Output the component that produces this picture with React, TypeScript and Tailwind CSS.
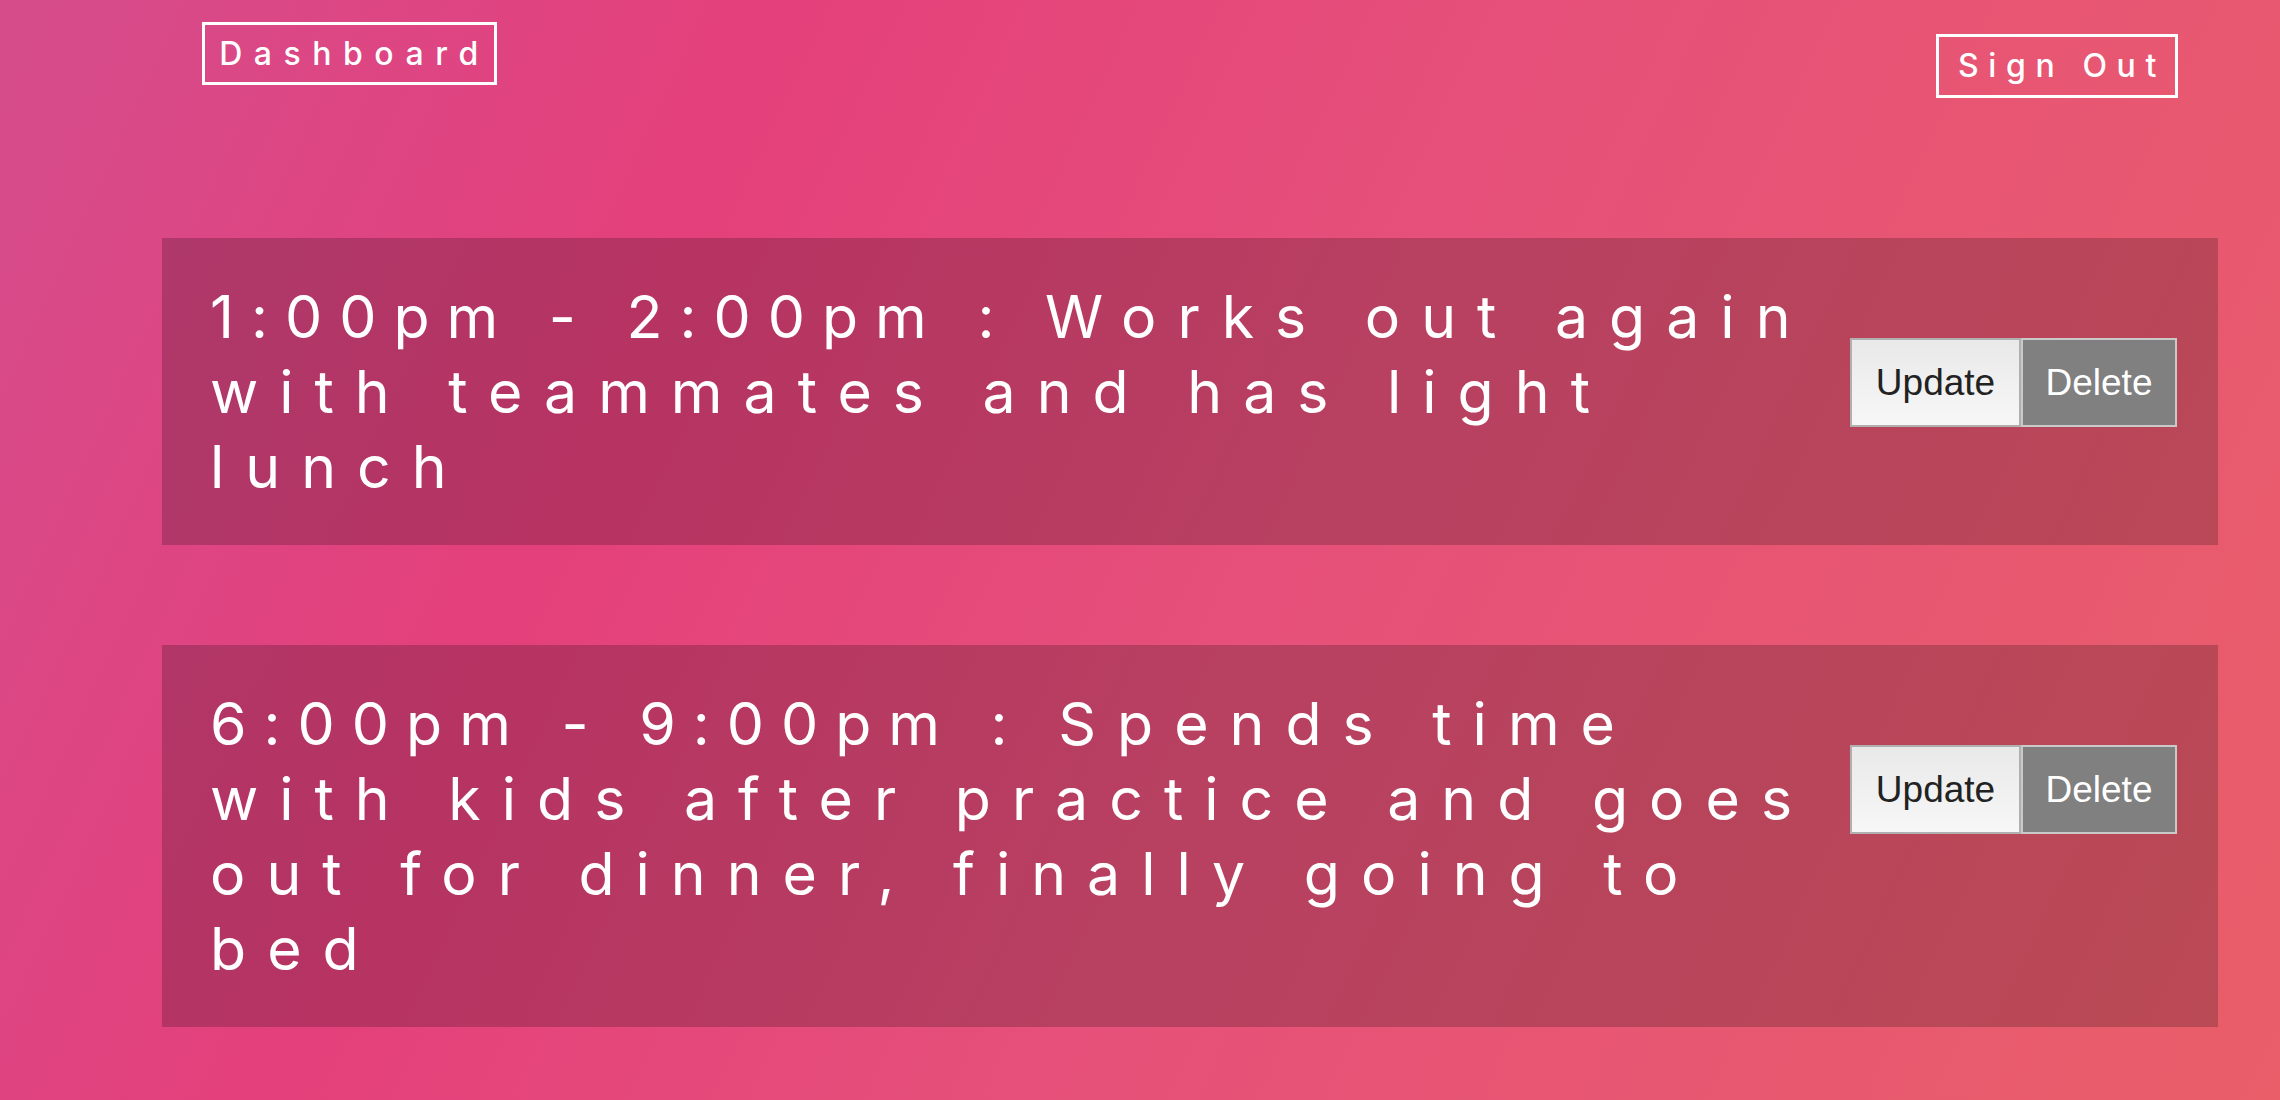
import React from 'react';

const FONT = "font-['Inter','Noto_Sans',sans-serif]";

// lines are kept as they wrap in the design
const ENTRIES = [
  {
    id: 1,
    time: '1:00pm - 2:00pm : ',
    lines: ['Works out again', 'with teammates and has light', 'lunch'],
  },
  {
    id: 2,
    time: '6:00pm - 9:00pm : ',
    lines: [
      'Spends time',
      'with kids after practice and goes',
      'out for dinner, finally going to',
      'bed',
    ],
  },
];

function ScheduleCard({ time, lines }: { time: string; lines: string[] }) {
  return (
    <div className="ml-[162px] w-[2056px] bg-black/20 flex items-start pl-[48px] pr-[41px] py-[41px]">
      <p className={`${FONT} flex-1 min-w-0 text-[59px] leading-[75px] tracking-[21px] text-white font-normal`}>
        {lines.map((l, i) => (
          <span key={i} className="block whitespace-pre">
            {i === 0 && <span className="tracking-[17px]">{time}</span>}
            {l}
          </span>
        ))}
      </p>
      <div className="mt-[59px] flex shrink-0 font-['Liberation_Sans',Arial,sans-serif] text-[37px]">
        <button className="w-[171px] h-[89px] border-2 border-[#b0b0b0] bg-gradient-to-b from-[#e9e9e9] to-[#f7f7f7] text-[#222]">
          Update
        </button>
        <button className="w-[156px] h-[89px] border-2 border-[#c9c9c9] bg-[#808080] text-white">
          Delete
        </button>
      </div>
    </div>
  );
}

export default function App() {
  return (
    <div className="min-h-screen w-full bg-[linear-gradient(115deg,#d54c8b_0%,#e4407b_28%,#e6507a_55%,#e95e69_100%)] pb-[71px]">
      <header className="flex items-start justify-between pl-[202px] pr-[102px] pt-[22px]">
        <a className={`${FONT} w-[295px] h-[63px] border-[3px] border-white flex items-center justify-center pl-[10px] text-[32px] font-medium tracking-[0.36em] text-white`}>
          Dashboard
        </a>
        <a className={`${FONT} mt-[12px] w-[242px] h-[64px] border-[3px] border-white flex items-center justify-center pl-[10px] text-[32px] font-medium tracking-[0.3em] text-white`}>
          Sign Out
        </a>
      </header>

      <main className="mt-[140px] flex flex-col gap-[100px]">
        {ENTRIES.map(e => (
          <ScheduleCard key={e.id} time={e.time} lines={e.lines} />
        ))}
      </main>
    </div>
  );
}
